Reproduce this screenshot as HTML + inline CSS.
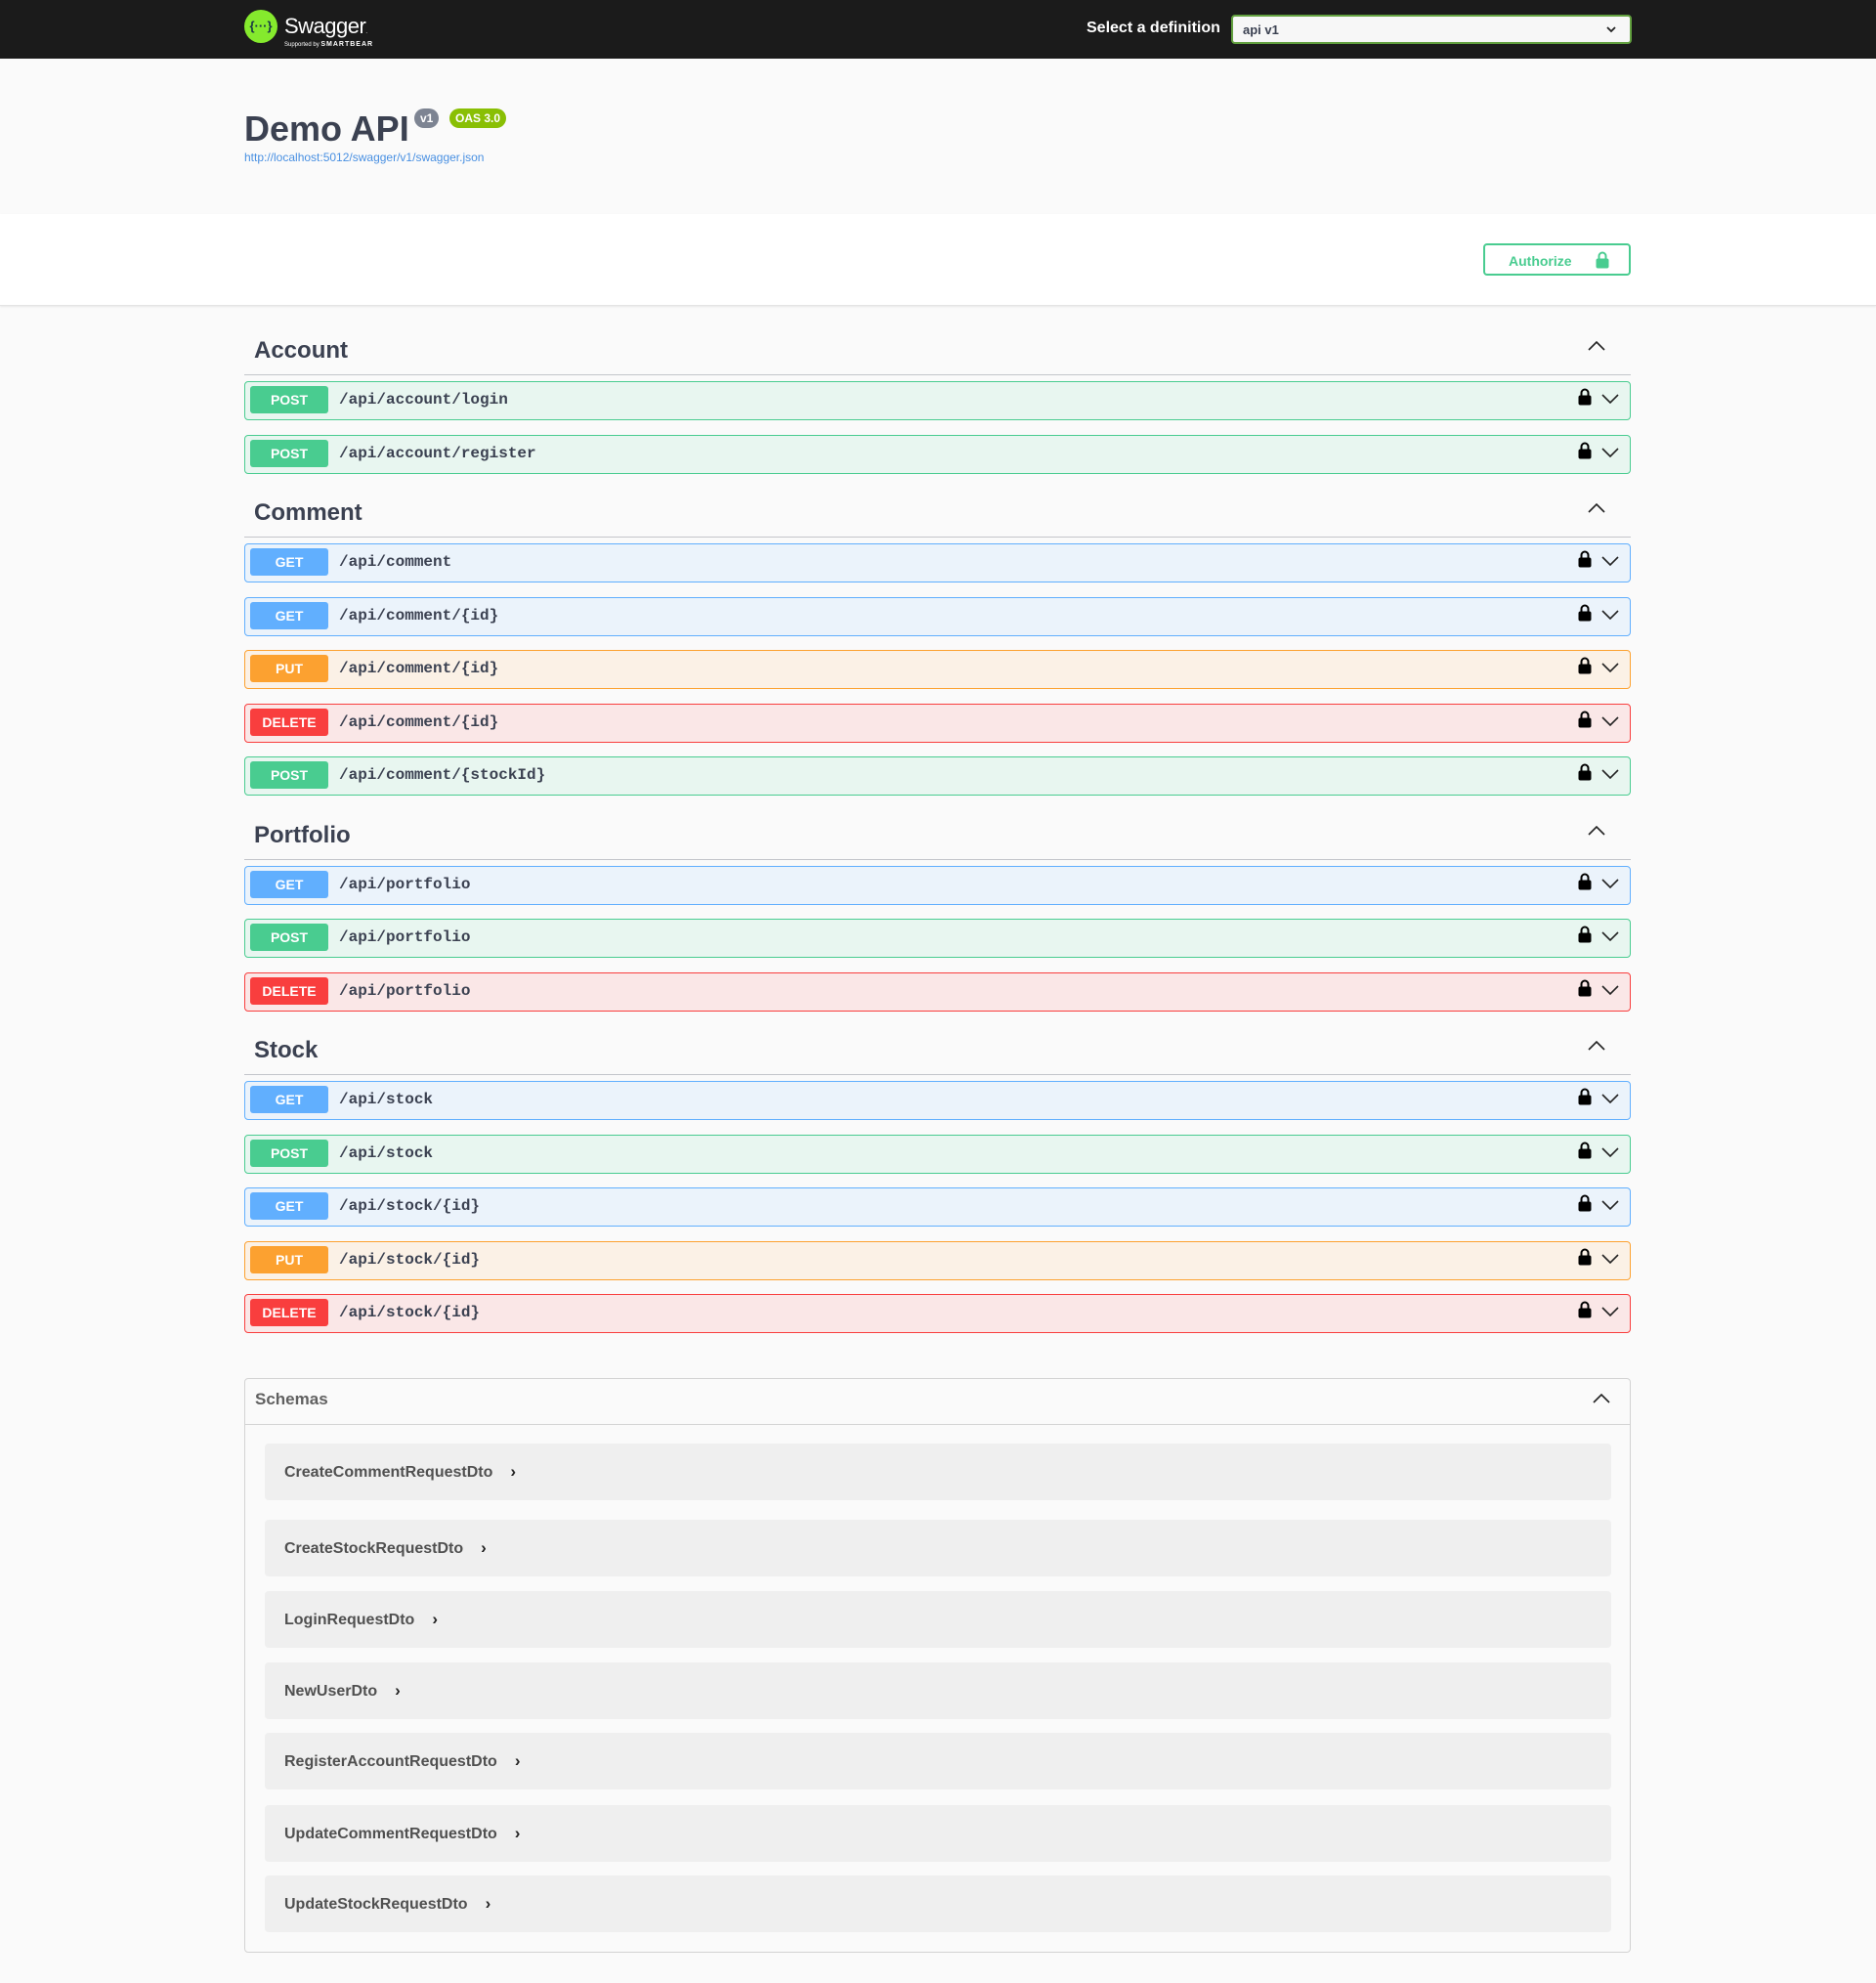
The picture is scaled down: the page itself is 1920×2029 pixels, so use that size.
<!DOCTYPE html>
<html><head><meta charset="utf-8">
<style>
*{box-sizing:border-box;margin:0;padding:0}
body{width:1920px;height:2029px;background:#fafafa;font-family:"Liberation Sans",sans-serif;color:#3b4151;position:relative;overflow:hidden}
.top{position:absolute;left:0;top:0;width:1920px;height:60px;background:#1b1b1b}
.logo{position:absolute;left:250px;top:10px;width:34px;height:34px;border-radius:50%;background:#85ea2d;color:#173647;font-size:13px;font-weight:bold;text-align:center;line-height:34px}
.sw{position:absolute;left:291px;top:14px;color:#fff;font-size:22px;letter-spacing:-0.5px}
.sb{position:absolute;left:291px;top:42px;color:#fff;font-size:6px}
.sb b{font-size:7px;letter-spacing:1px}
.seltxt{position:absolute;left:1112px;top:20px;color:#fff;font-size:16px;font-weight:bold}
.sel{position:absolute;left:1260px;top:15px;width:410px;height:30px;border:2px solid #62a03f;border-radius:4px;background:#f7f7f7;font-size:13px;font-weight:bold;padding:6px 10px}
.info{position:absolute;left:250px;top:111px}
.title{font-size:36px;font-weight:bold;color:#3b4151;position:absolute;left:0;top:0;white-space:nowrap}
.bdg{position:absolute;top:0;height:20px;border-radius:10px;color:#fff;font-size:12px;font-weight:bold;line-height:20px;padding:0 6px;white-space:nowrap}
.url{position:absolute;left:250px;top:154px;font-size:12px;color:#4990e2}
.auth{position:absolute;left:0;top:219px;width:1920px;height:94px;background:#fff;border-bottom:1px solid #e4e4e4;box-shadow:0 1px 2px rgba(0,0,0,.08)}
.abtn{position:absolute;left:1518px;top:30px;width:151px;height:33px;border:2px solid #49cc90;border-radius:4px;color:#49cc90;font-weight:bold;font-size:14px;padding:8px 0 0 24px}
.abtn svg{position:absolute;right:20px;top:6px}
.wrap{position:absolute;left:250px;top:333px;width:1419px}
.tag{height:51px;border-bottom:1px solid #c3c5ca;margin-bottom:6px;position:relative}
.tag h3{font-size:24px;font-weight:bold;position:absolute;left:10px;top:12px}
.tag svg{position:absolute;right:26px;top:16px}
.op{height:40px;border:1px solid;border-radius:4px;margin-bottom:14.5px;position:relative}
.op .m{position:absolute;left:5px;top:4px;width:80px;height:28px;border-radius:3px;color:#fff;font-weight:bold;font-size:14px;text-align:center;line-height:28px}
.op .p{position:absolute;left:96px;top:9px;font-family:"Liberation Mono",monospace;font-weight:bold;font-size:16px;color:#3b4151}
.op .lk{position:absolute;right:39px;top:6px}
.op .cv{position:absolute;right:11px;top:12px}
.post{background:#e8f6f0;border-color:#49cc90}.post .m{background:#49cc90}
.get{background:#ebf3fb;border-color:#61affe}.get .m{background:#61affe}
.put{background:#fbf1e6;border-color:#fca130}.put .m{background:#fca130}
.del{background:#fae7e7;border-color:#f93e3e}.del .m{background:#f93e3e}
.schemas{position:absolute;left:250px;top:1410px;width:1419px;height:588px;border:1px solid #d3d3d3;border-radius:4px}
.sh{height:47px;border-bottom:1px solid #d3d3d3;position:relative}
.sh span{position:absolute;left:10px;top:11px;font-size:17px;font-weight:bold;color:#606060}
.sh svg{position:absolute;right:20px;top:15px}
.it{position:absolute;left:20px;width:1378px;height:58px;background:#efefef;border-radius:4px;font-size:16px;font-weight:bold;color:#505050;padding:19px 0 0 20px}
.it i{font-style:normal;margin-left:18px;font-size:17px;color:#222}
</style></head><body>
<div class="top">
<div class="logo">{···}</div>
<div class="sw">Swagger<span style="font-size:6px">.</span></div>
<div class="sb">Supported by <b>SMARTBEAR</b></div>
<div class="seltxt">Select a definition</div>
<div class="sel">api v1<svg style="position:absolute;right:14px;top:10px" width="10" height="7" viewBox="0 0 10 7"><path d="M1 1l4 4 4-4" fill="none" stroke="#222" stroke-width="1.8"/></svg></div>
</div>
<div class="info">
<div class="title">Demo API</div>
<div class="bdg" style="left:174px;background:#7d8492">v1</div>
<div class="bdg" style="left:210px;background:#89bf04">OAS 3.0</div>
</div>
<div class="url">http://localhost:5012/swagger/v1/swagger.json</div>
<div class="auth"><div class="abtn">Authorize<svg width="14" height="18" viewBox="0 0 14 18"><path d="M3.5 8V5a3.5 3.5 0 0 1 7 0v3" fill="none" stroke="#49cc90" stroke-width="2"/><rect x="0.5" y="7.5" width="13" height="10" rx="2" fill="#49cc90"/></svg></div></div>

<div class="wrap">
<div class="tag"><h3>Account</h3>UP</div>
<div class="op post"><div class="m">POST</div><div class="p">/api/account/login</div>LOCK</div>
<div class="op post"><div class="m">POST</div><div class="p">/api/account/register</div>LOCK</div>
<div class="tag"><h3>Comment</h3>UP</div>
<div class="op get"><div class="m">GET</div><div class="p">/api/comment</div>LOCK</div>
<div class="op get"><div class="m">GET</div><div class="p">/api/comment/{id}</div>LOCK</div>
<div class="op put"><div class="m">PUT</div><div class="p">/api/comment/{id}</div>LOCK</div>
<div class="op del"><div class="m">DELETE</div><div class="p">/api/comment/{id}</div>LOCK</div>
<div class="op post"><div class="m">POST</div><div class="p">/api/comment/{stockId}</div>LOCK</div>
<div class="tag"><h3>Portfolio</h3>UP</div>
<div class="op get"><div class="m">GET</div><div class="p">/api/portfolio</div>LOCK</div>
<div class="op post"><div class="m">POST</div><div class="p">/api/portfolio</div>LOCK</div>
<div class="op del"><div class="m">DELETE</div><div class="p">/api/portfolio</div>LOCK</div>
<div class="tag"><h3>Stock</h3>UP</div>
<div class="op get"><div class="m">GET</div><div class="p">/api/stock</div>LOCK</div>
<div class="op post"><div class="m">POST</div><div class="p">/api/stock</div>LOCK</div>
<div class="op get"><div class="m">GET</div><div class="p">/api/stock/{id}</div>LOCK</div>
<div class="op put"><div class="m">PUT</div><div class="p">/api/stock/{id}</div>LOCK</div>
<div class="op del"><div class="m">DELETE</div><div class="p">/api/stock/{id}</div>LOCK</div>
</div>

<div class="schemas">
<div class="sh"><span>Schemas</span><svg width="18" height="10" viewBox="0 0 18 10"><path d="M1 9l8-8 8 8" fill="none" stroke="#222" stroke-width="1.6"/></svg></div>
<div class="it" style="top:66px">CreateCommentRequestDto<i>›</i></div>
<div class="it" style="top:144px">CreateStockRequestDto<i>›</i></div>
<div class="it" style="top:217px">LoginRequestDto<i>›</i></div>
<div class="it" style="top:290px">NewUserDto<i>›</i></div>
<div class="it" style="top:362px">RegisterAccountRequestDto<i>›</i></div>
<div class="it" style="top:436px">UpdateCommentRequestDto<i>›</i></div>
<div class="it" style="top:508px">UpdateStockRequestDto<i>›</i></div>
</div>
<script>
var lock='<svg class="lk" width="14" height="18" viewBox="0 0 14 18"><path d="M3.5 8V5a3.5 3.5 0 0 1 7 0v3" fill="none" stroke="#000" stroke-width="2"/><rect x="0.5" y="7.5" width="13" height="10" rx="2" fill="#000"/></svg><svg class="cv" width="18" height="10" viewBox="0 0 18 10"><path d="M1 1l8 8 8-8" fill="none" stroke="#222" stroke-width="1.6"/></svg>';
var up='<svg width="18" height="10" viewBox="0 0 18 10"><path d="M1 9l8-8 8 8" fill="none" stroke="#222" stroke-width="1.6"/></svg>';
document.querySelectorAll('.op').forEach(function(e){e.innerHTML=e.innerHTML.replace('LOCK',lock);});
document.querySelectorAll('.tag').forEach(function(e){e.innerHTML=e.innerHTML.replace('UP',up);});
</script>
</body></html>
